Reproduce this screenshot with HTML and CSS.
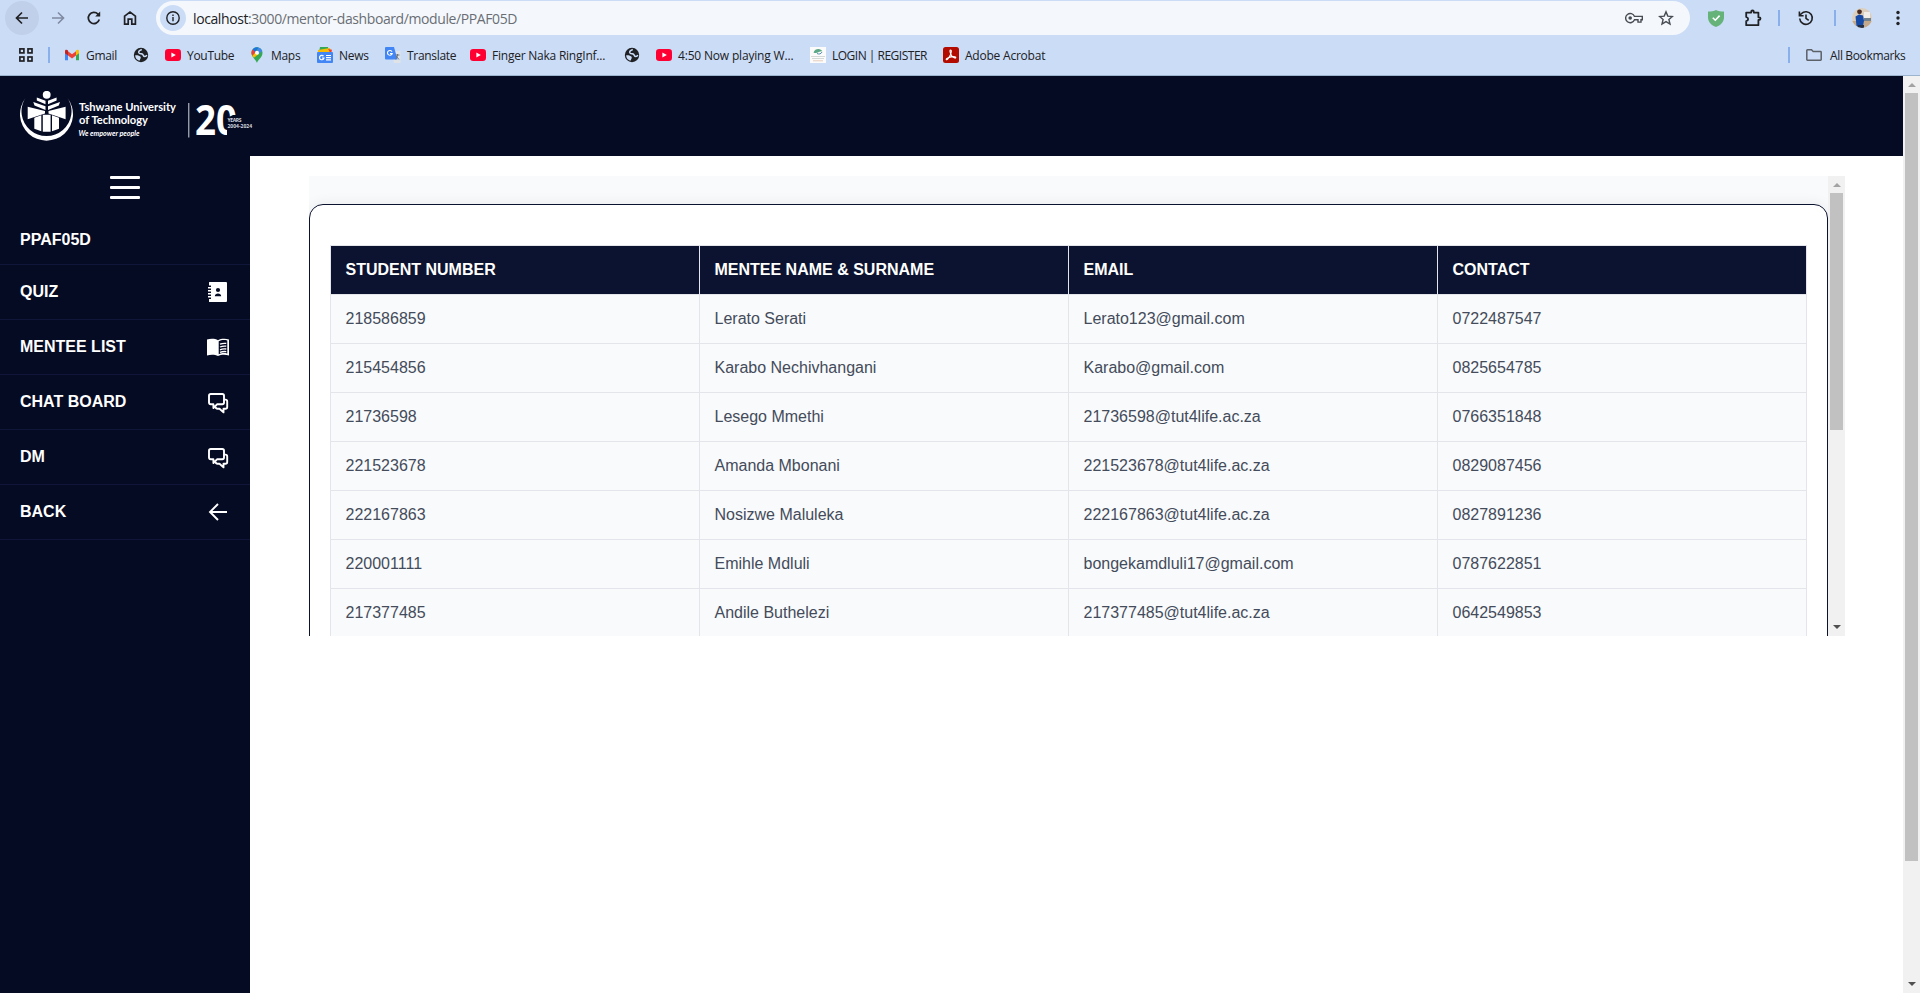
FILE: index.html
```html
<!DOCTYPE html>
<html lang="en">
<head>
<meta charset="utf-8">
<title>Mentor Dashboard</title>
<link rel="stylesheet" href="styles.css">
</head>
<body>
<svg class="defs" width="0" height="0" aria-hidden="true">
  <symbol id="yt" viewBox="0 0 16 16"><rect x="0" y="2" width="16" height="12" rx="3.2" fill="#ff0033"/><path d="M6.4 5.4v5.2L10.8 8z" fill="#fff"/></symbol>
  <symbol id="globe" viewBox="0 0 16 16"><circle cx="8" cy="8" r="7.2" fill="#202124"/><path d="M9 2.300L6.200 3.800 5.800 6.400l3.200.4 1.200 2.200 2.600.2 1.200-2.600C13.800 4.400 12 2.600 9 2.300z" fill="#202124"/><path d="M8.800 2.500C5.800 3.400 5 5 6.200 6.200c1 .9 2.800.3 3.600 1.300.7.900.5 1.900 2 1.900 1 0 1.700-.6 2-1.400" fill="none" stroke="#cbdcf6" stroke-width="1.500"/><path d="M2.200 8.200c2.200-.2 4.600.2 5.400 1.600.6 1.200-.4 2-.8 3.800-2.600-.2-4.600-2.600-4.600-5.400z" fill="#cbdcf6"/></symbol>
  <symbol id="chat" viewBox="0 0 24 24"><g fill="none" stroke="#fff" stroke-width="1.900" stroke-linejoin="round"><path d="M4.700 3h11.600Q18 3 18 4.700v6.900q0 1.700-1.700 1.700H11L7.400 17v-3.700H4.700Q3 13.300 3 11.600V4.700Q3 3 4.700 3z"/><path d="M18 8.600h1.400q1.800 0 1.800 1.800v5.500q0 1.800-1.800 1.800h-1.900v3.700l-4-3.700h-2q-1.700 0-1.900-1.800"/></g></symbol>
</svg>
<div class="chrome">
  <div class="toolbar">
    <div class="tool back"><svg width="20" height="20" viewBox="0 0 20 20"><path d="M16 10H4.800M10 4.500L4.500 10l5.500 5.500" fill="none" stroke="#202124" stroke-width="1.700"/></svg></div>
    <div class="tool fwd"><svg width="20" height="20" viewBox="0 0 20 20"><path d="M4 10h11.200M10 4.500l5.500 5.500-5.500 5.500" fill="none" stroke="#8089a0" stroke-width="1.600"/></svg></div>
    <div class="tool reload"><svg width="20" height="20" viewBox="0 0 20 20"><path d="M15.300 11.600A5.600 5.600 0 1 1 14 6.100l1.600 1.600" fill="none" stroke="#202124" stroke-width="1.700"/><path d="M16.200 3.600v5h-5z" fill="#202124"/></svg></div>
    <div class="tool home"><svg width="20" height="20" viewBox="0 0 20 20"><path d="M4.600 16.200V8.200L10 4l5.400 4.200v8h-3.600v-5H8.200v5z" fill="none" stroke="#202124" stroke-width="1.700"/></svg></div>
    <div class="address">
      <div class="info"><svg width="16" height="16" viewBox="0 0 16 16"><circle cx="8" cy="8" r="6.200" fill="none" stroke="#202124" stroke-width="1.400"/><path d="M8 7v4.200M8 4.600v1.500" stroke="#202124" stroke-width="1.400"/></svg></div>
      <div class="url"><b>localhost</b>:3000/mentor-dashboard/module/PPAF05D</div>
      <svg class="key" width="18" height="12" viewBox="0 0 18 12"><path d="M9.500 4.400A4.600 4.600 0 1 0 9.500 7.800H13v2.300h3V7.800h1.300V4.400z" fill="none" stroke="#474b52" stroke-width="1.400"/><circle cx="5.200" cy="6" r="1.800" fill="#474b52"/></svg>
      <svg class="star" width="16" height="16" viewBox="0 0 16 16"><path d="M8 1.900l1.800 4.200 4.600.4-3.500 3 1.100 4.500L8 11.600 4 14l1.100-4.500-3.500-3 4.600-.4z" fill="none" stroke="#474b52" stroke-width="1.400"/></svg>
    </div>
    <svg class="shield" width="16" height="17" viewBox="0 0 16 17"><path d="M8 0c2 1.100 5 1.600 8 1.600v6C16 12 12.600 15.500 8 17 3.400 15.500 0 12 0 7.600v-6C3 1.600 6 1.100 8 0z" fill="#66b37a"/><path d="M4.800 7.700l2.500 2.500 4.300-4.600" fill="none" stroke="#fff" stroke-width="1.600"/></svg>
    <svg class="ext" width="18" height="18" viewBox="0 0 18 18"><path d="M2.200 3.600h5V2.800a1.300 1.300 0 0 1 2.600 0v.8h4.600v4.700h.8a1.300 1.300 0 0 1 0 2.600h-.8v5.300H2.200v-4.100c2.600-.4 2.600-3.600 0-4z" fill="none" stroke="#202124" stroke-width="1.800" stroke-linejoin="round"/></svg>
    <i class="sep s1"></i>
    <svg class="hist" width="16" height="16" viewBox="0 0 16 16"><path d="M1.700 8.500A6.300 6.300 0 1 0 3.300 3.800L1.500 5.500M1.400 1.600v4.200h4.200M8 4.600v3.800l2.700 2" fill="none" stroke="#202124" stroke-width="1.600"/></svg>
    <i class="sep s2"></i>
    <svg class="avatar" width="20" height="20" viewBox="0 0 20 20"><clipPath id="av"><circle cx="10" cy="10" r="10"/></clipPath><g clip-path="url(#av)"><rect width="20" height="20" fill="#dccfbd"/><rect x="12" y="4" width="6" height="6" fill="#f2efe9"/><rect x="12" y="10" width="7" height="4" fill="#71828f"/><rect y="13" width="20" height="7" fill="#c4a98a"/><path d="M3.500 8.500L7 6.500l4 1 1 5-1 5.500H4.500z" fill="#174ba8"/><circle cx="7.500" cy="3.800" r="2.400" fill="#4b2c20"/><path d="M6 17h6v3H5z" fill="#24304a"/></g></svg>
    <svg class="dots" width="4" height="16" viewBox="0 0 4 16" fill="#202124"><circle cx="2" cy="2.500" r="1.700"/><circle cx="2" cy="8" r="1.700"/><circle cx="2" cy="13.500" r="1.700"/></svg>
  </div>
  <div class="bookmarks">
    <svg class="apps" width="14" height="14" viewBox="0 0 14 14" fill="none" stroke="#202124" stroke-width="1.700"><rect x=".9" y=".9" width="4" height="4"/><rect x="9" y=".9" width="4" height="4"/><rect x=".9" y="9" width="4" height="4"/><rect x="9" y="9" width="4" height="4"/></svg>
    <i class="sep s3"></i>
    <div class="bm w-gmail"><svg width="16" height="16" viewBox="0 0 16 16"><path d="M1 4v9.200h3V8z" fill="#4285f4"/><path d="M15 4v9.200h-3V8z" fill="#34a853"/><path d="M4 4.200v4.300l4 3 4-3V4.200L8 7.300z" fill="#ea4335"/><path d="M1 4.200C1 2.600 2.700 2.300 4 3.400V8.500L1 6.200z" fill="#c5221f"/><path d="M15 4.200c0-1.600-1.700-1.900-3-.8v5.100l3-2.300z" fill="#fbbc04"/></svg><span>Gmail</span></div>
    <div class="bm w-g1"><svg width="16" height="16"><use href="#globe"/></svg></div>
    <div class="bm w-yt"><svg width="16" height="16"><use href="#yt"/></svg><span>YouTube</span></div>
    <div class="bm w-maps"><svg width="16" height="16" viewBox="0 0 16 16"><path d="M8 16C7.300 12.600 2.500 10.500 2.500 5.700A5.500 5.500 0 0 1 13.500 5.700C13.500 10.500 8.700 12.600 8 16z" fill="#34a853"/><path d="M3.800 2.200A5.500 5.500 0 0 0 3.400 8.800L8 4z" fill="#ea4335"/><path d="M3.800 2.200A5.500 5.500 0 0 1 9.600.4L6 5z" fill="#1a73e8"/><path d="M9.600.4a5.500 5.500 0 0 1 3.500 3.300L9.700 7.200 8 4z" fill="#4285f4"/><path d="M3.400 8.800l1.500 2L10 6.700 6.500 5.400z" fill="#fbbc04"/><circle cx="8" cy="5.700" r="2" fill="#fff"/></svg><span>Maps</span></div>
    <div class="bm w-news"><svg width="16" height="16" viewBox="0 0 16 16"><path d="M3 0h8l1 5H2z" fill="#34a853"/><path d="M1 3l12-2 1 5H1z" fill="#fbbc04"/><path d="M11 2l4 .8L14 7z" fill="#ea4335"/><rect y="5" width="16" height="11" rx="1" fill="#4285f4"/><path d="M6.500 9.200A2.200 2.200 0 1 0 6.900 11H5M9 8.500h5M9 10.700h5M9 12.900h5" fill="none" stroke="#fff" stroke-width="1.200"/></svg><span>News</span></div>
    <div class="bm w-tr"><svg width="16" height="16" viewBox="0 0 16 16"><path d="M6 4h9.500v12H9z" fill="#dfe3e8"/><path d="M1 0h8l3.500 12.500H1q-1 0-1-1V1q0-1 1-1z" fill="#4285f4"/><path d="M7 4.700A2.400 2.400 0 1 0 7.200 6.500H5" fill="none" stroke="#fff" stroke-width="1.100"/><path d="M10.500 8h4M12.500 7v1c0 2-1 3.500-2 4M11 9l3 3.500" fill="none" stroke="#6d7680"/></svg><span>Translate</span></div>
    <div class="bm w-fn"><svg width="16" height="16"><use href="#yt"/></svg><span>Finger Naka RingInf...</span></div>
    <div class="bm w-g2"><svg width="16" height="16"><use href="#globe"/></svg></div>
    <div class="bm w-np"><svg width="16" height="16"><use href="#yt"/></svg><span>4:50 Now playing W...</span></div>
    <div class="bm w-log"><svg width="16" height="16" viewBox="0 0 16 16"><rect width="16" height="16" fill="#fafbfa"/><path d="M3.500 5.500C5 1 11 1 12.500 4.500 10 3.500 7 7.500 3.500 5.500z" fill="#5ba886"/><path d="M7 6.500c2 1 4 .5 5-1.500" stroke="#588cb0" fill="none"/><path d="M1 9.500h14M2 11.500h12" stroke="#c9d1cd" stroke-width=".8"/><path d="M3 13.800h10" stroke="#dfb7a4" stroke-width=".7"/></svg><span>LOGIN | REGISTER</span></div>
    <div class="bm w-ad"><svg width="16" height="16" viewBox="0 0 16 16"><rect width="16" height="16" rx="2.500" fill="#b30b00"/><path d="M7.500 3c1.400 0 .8 3-.3 5.300C6 10.800 4 13.300 3.300 12.700c-1-.9 3-2.900 6-3.100 2-.1 3.700.3 3.500 1.100-.3 1-2.600 0-4.100-1.900C7.300 7 6.300 3 7.500 3z" fill="none" stroke="#fff" stroke-width="1.100"/></svg><span>Adobe Acrobat</span></div>
    <i class="sep s4"></i>
    <svg class="folder" width="16" height="12" viewBox="0 0 16 12"><path d="M.8 1.500q0-.7.7-.7h4l1.700 1.700h7.300q.7 0 .7.700v7.300q0 .7-.7.7h-13q-.7 0-.7-.7z" fill="none" stroke="#5c6067" stroke-width="1.500"/></svg>
    <span class="all">All Bookmarks</span>
  </div>
</div>
<div class="page">
  <div class="app">
    <header class="header">
      <svg class="logo" width="240" height="54" viewBox="0 0 240 54">
        <g fill="#fff">
          <path d="M5.500 7A26.500 26.500 0 1 0 47.500 7 25 24.600 0 1 1 5.500 7z"/>
          <circle cx="26.700" cy="3.800" r="3.900"/>
          <path d="M16.800 6.500l8.700 3.300v3.400l-8.700-3.700zM36.600 6.500L28 9.800v3.400l8.600-3.700zM13.300 11l12.200 4.300v3.600L14.500 14.500zM40 11l-12 4.300v3.600l10.800-4.400z"/>
          <path d="M7.700 15.700L25 20v2.500L7.700 28.300zM45.600 15.700L28.500 20v2.500l17.100 5.800z"/>
          <path d="M14.300 26.800l7-2.600v16l-7-2.400zM22.800 23.700h7.800v17h-7.800zM32 24.200l7 2.600v11l-7 2.400z"/>
        </g>
        <text class="lt" x="59" y="20" textLength="97" lengthAdjust="spacingAndGlyphs">Tshwane University</text>
        <text class="lt" x="59" y="32.500" textLength="69" lengthAdjust="spacingAndGlyphs">of Technology</text>
        <text class="ls" x="58.500" y="45" textLength="61" lengthAdjust="spacingAndGlyphs">We empower people</text>
        <rect x="168.300" y="12" width="1" height="34.500" fill="#d5d7df"/>
        <text class="twenty" x="175" y="43.500" textLength="42" lengthAdjust="spacingAndGlyphs">20</text>
        <path d="M207 46V27l6-3h7v22z" fill="#060b24"/>
        <text class="yr" x="207.500" y="31" textLength="14">YEARS</text>
        <text class="yr" x="207.500" y="37" textLength="24.500">2004-2024</text>
      </svg>
    </header>
    <div class="body">
      <nav class="sidebar">
        <div class="burger"><i></i><i></i><i></i></div>
        <div class="item title">PPAF05D</div>
        <div class="item">QUIZ<svg width="24" height="24" viewBox="0 0 24 24"><path d="M3.500 2H20q1 0 1 1v18q0 1-1 1H3.500q-.5 0-.5-.5V19h2v-1.500H2V16h3v-1.500H2V13h3v-1.500H2V10h3V8.500H2V7h3V5.500H3v-3q0-.5.500-.5z" fill="#fff"/><circle cx="12" cy="10" r="2.100" fill="#060b24"/><path d="M8.800 16.200c0-3.600 6.400-3.600 6.400 0z" fill="#060b24"/></svg></div>
        <div class="item">MENTEE LIST<svg width="24" height="24" viewBox="0 0 24 24"><path d="M12 5.200C9 3.500 4.500 3.300 1 4.600v16c3.500-1.300 8-1.100 11 .4 3-1.500 7.500-1.700 11-.4v-16c-3.500-1.300-8-1.100-11 .6z" fill="#fff"/><path d="M12.700 6.300C15 4.900 18.500 4.700 21.300 5.500v13c-3-.7-6.300-.5-8.600.8z" fill="#060b24"/><path d="M14 9.200c2-.9 4-1.100 6.300-.8M14 12c2-.9 4-1.100 6.300-.8M14 14.800c2-.9 4-1.100 6.300-.8M14 17.400c2-.9 4-1.100 6.300-.8" fill="none" stroke="#fff" stroke-width="1.300"/></svg></div>
        <div class="item">CHAT BOARD<svg class="chat" width="24" height="24"><use href="#chat"/></svg></div>
        <div class="item">DM<svg class="chat" width="24" height="24"><use href="#chat"/></svg></div>
        <div class="item">BACK<svg width="24" height="24" viewBox="0 0 24 24"><path d="M21 12H4.500M12 4l-8 8 8 8" fill="none" stroke="#fff" stroke-width="1.900"/></svg></div>
      </nav>
      <main class="main">
        <section class="panel">
          <div class="panel-view">
            <div class="card">
              <table class="tbl">
                <thead><tr><th>STUDENT NUMBER</th><th>MENTEE NAME &amp; SURNAME</th><th>EMAIL</th><th>CONTACT</th></tr></thead>
                <tbody>
                  <tr><td>218586859</td><td>Lerato Serati</td><td>Lerato123@gmail.com</td><td>0722487547</td></tr>
                  <tr><td>215454856</td><td>Karabo Nechivhangani</td><td>Karabo@gmail.com</td><td>0825654785</td></tr>
                  <tr><td>21736598</td><td>Lesego Mmethi</td><td>21736598@tut4life.ac.za</td><td>0766351848</td></tr>
                  <tr><td>221523678</td><td>Amanda Mbonani</td><td>221523678@tut4life.ac.za</td><td>0829087456</td></tr>
                  <tr><td>222167863</td><td>Nosizwe Maluleka</td><td>222167863@tut4life.ac.za</td><td>0827891236</td></tr>
                  <tr><td>220001111</td><td>Emihle Mdluli</td><td>bongekamdluli17@gmail.com</td><td>0787622851</td></tr>
                  <tr><td>217377485</td><td>Andile Buthelezi</td><td>217377485@tut4life.ac.za</td><td>0642549853</td></tr>
                </tbody>
              </table>
            </div>
          </div>
          <div class="bar"><i class="up"></i><i class="thumb t-in"></i><i class="down"></i></div>
        </section>
      </main>
    </div>
  </div>
  <div class="bar"><i class="up"></i><i class="thumb t-out"></i><i class="down"></i></div>
</div>
</body>
</html>
```
FILE: styles.css
```css
* { box-sizing: border-box; }
body { margin: 0; width: 1920px; height: 993px; overflow: hidden; background: #fff; font-family: "Liberation Sans", Arial, sans-serif; display: flex; flex-direction: column; }
svg { flex: none; display: block; }
.defs { display: none; }

/* browser chrome */
.chrome { height: 76px; flex: none; background: #cbdcf6; border-bottom: 1px solid #9db4cf; font-family: "Open Sans", "Noto Sans", sans-serif; color: #202124; }
.toolbar { height: 36px; padding: 1px 0 1px 5px; display: flex; align-items: center; }
.tool { height: 34px; display: flex; align-items: center; justify-content: center; flex: none; }
.back { width: 34px; border-radius: 17px; background: #c0d0eb; }
.fwd { width: 37px; }
.reload { width: 36px; }
.home { width: 36px; margin-right: 8px; }
.address { width: 1534px; height: 34px; border-radius: 17px; background: #f4f8fd; display: flex; align-items: center; padding-left: 4px; flex: none; }
.info { width: 26px; height: 26px; border-radius: 13px; background: #cbdcf6; display: flex; align-items: center; justify-content: center; }
.url { margin-left: 7px; width: 1432px; font-size: 14px; letter-spacing: -.4px; color: #6a6e74; white-space: nowrap; }
.url b { font-weight: 400; color: #202124; }
.star { margin-left: 15px; }
.shield { margin-left: 18px; }
.ext { margin-left: 20px; }
.sep { width: 2px; height: 16px; background: #8ab0ec; flex: none; }
.s1 { margin-left: 16px; }
.hist { margin-left: 18px; }
.s2 { margin-left: 20px; }
.avatar { margin-left: 16px; }
.dots { margin-left: 24px; }
.bookmarks { height: 39px; padding: 0 0 1px 19px; display: flex; align-items: center; font-size: 12px; letter-spacing: -.3px; white-space: nowrap; }
.s3 { margin: 0 14px 0 15px; }
.bm { display: flex; align-items: center; gap: 6px; flex: none; }
.w-gmail { width: 69px; }
.w-g1 { width: 32px; }
.w-yt { width: 84px; }
.w-maps { width: 68px; }
.w-news { width: 68px; }
.w-tr { width: 85px; }
.w-fn { width: 154px; letter-spacing: -.23px; }
.w-g2 { width: 32px; }
.w-np { width: 154px; letter-spacing: -.18px; }
.w-log { width: 133px; letter-spacing: -.5px; }
.w-ad { width: 845px; letter-spacing: -.22px; }
.folder { margin: 0 8px 0 16px; }
.all { letter-spacing: -.36px; }

/* page */
.page { flex: 1; display: flex; min-height: 0; }
.app { width: 1903px; display: flex; flex-direction: column; }
.header { height: 80px; background: #060b24; flex: none; padding: 15px 20px; }
.lt { font: 700 11.5px Lato, sans-serif; fill: #fff; }
.ls { font: italic 700 7.5px Lato, sans-serif; fill: #fff; }
.twenty { font: 700 42px "Open Sans", sans-serif; fill: #fff; }
.yr { font: 700 5px "Open Sans", sans-serif; fill: #d5d7df; }
.body { flex: 1; display: flex; }
.sidebar { width: 250px; background: #060b24; color: #fff; font-weight: 700; font-size: 16px; }
.burger { height: 59px; padding-top: 20px; display: flex; flex-direction: column; align-items: center; gap: 7px; }
.burger i { width: 30px; height: 3px; border-radius: 1px; background: #fff; }
.item { height: 55px; padding: 0 20px; border-bottom: 1px solid #0f1639; display: flex; align-items: center; justify-content: space-between; }
.title { height: 50px; }
.chat { margin-top: 2px; }
.main { flex: 1; padding: 20px 58px 0 59px; }
.panel { height: 460px; display: flex; }
.panel-view { width: 1519px; overflow: hidden; background: #f8fafc; padding-top: 28px; }
.card { height: 600px; background: #fff; border: 1px solid #0c1330; border-radius: 14px; padding: 40px 20px; box-shadow: 0 0 14px rgba(0, 0, 0, .07); }
.tbl { width: 1477px; table-layout: fixed; border-collapse: collapse; font-size: 16px; color: #444b5a; }
.tbl th, .tbl td { height: 49px; padding: 0 14.5px; border: 1px solid #e3e5ea; text-align: left; background: #f8fafc; }
.tbl th { background: #0c1330; color: #fff; }

/* scrollbars */
.bar { width: 17px; flex: none; background: #f1f1f1; display: flex; flex-direction: column; align-items: center; }
.up, .down { width: 0; height: 0; border: 4px solid transparent; border-top-width: 0; border-bottom: 4px solid #a3a3a3; margin: 7px 0 6px; }
.down { border-top: 4px solid #505050; border-bottom-width: 0; margin: auto 0 7px; }
.thumb { width: 13px; background: #c1c1c1; }
.t-in { height: 237px; }
.t-out { height: 768px; }
```
